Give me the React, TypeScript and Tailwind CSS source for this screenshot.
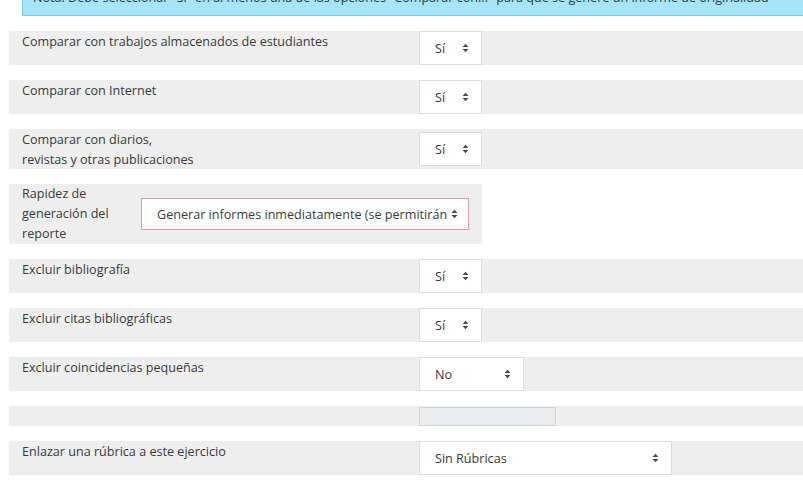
import React from 'react';

const font = { fontFamily: '"Open Sans", "Liberation Sans", sans-serif' };

function Caret() {
  return (
    <svg width="7" height="10" viewBox="0 0 7 10" className="shrink-0">
      <path d="M0.5 4 L3.5 0.8 L6.5 4 Z" fill="#4a4a4a" />
      <path d="M0.5 6 L3.5 9.2 L6.5 6 Z" fill="#4a4a4a" />
    </svg>
  );
}

function Select({ value, width, invalid }: { value: string; width: string; invalid?: boolean }) {
  return (
    <div
      className={`flex items-center justify-between gap-[4px] pl-[15px] pr-[12px] bg-white border ${
        invalid ? 'border-[#e59aa9] h-[32px]' : 'border-[#dcdcdc] h-[34px]'
      } ${width}`}
    >
      <span className="whitespace-nowrap pt-[2px]">{value}</span>
      <Caret />
    </div>
  );
}

type Row = { label: React.ReactNode; control: React.ReactNode };

const rows: Row[] = [
  { label: 'Comparar con trabajos almacenados de estudiantes', control: <Select value="Sí" width="w-[63px]" /> },
  { label: 'Comparar con Internet', control: <Select value="Sí" width="w-[63px]" /> },
  {
    label: (
      <>
        Comparar con diarios,
        <br />
        revistas y otras publicaciones
      </>
    ),
    control: <Select value="Sí" width="w-[63px]" />,
  },
];

const rowsAfter: Row[] = [
  { label: 'Excluir bibliografía', control: <Select value="Sí" width="w-[63px]" /> },
  { label: 'Excluir citas bibliográficas', control: <Select value="Sí" width="w-[63px]" /> },
  { label: 'Excluir coincidencias pequeñas', control: <Select value="No" width="w-[105px]" /> },
  { label: '', control: <div className="w-[137px] h-[19px] bg-[#e9ecef] border border-[#ced4da]" /> },
  { label: 'Enlazar una rúbrica a este ejercicio', control: <Select value="Sin Rúbricas" width="w-[253px]" /> },
];

function FormRow({ label, control }: Row) {
  return (
    <div className="flex items-center w-[820px] bg-[#eeeeee] mb-[15px]">
      <div className="self-start w-[410px] pl-[13px] min-h-[20px] leading-[19.5px] pt-[1px]">{label}</div>
      {control}
    </div>
  );
}

export default function App() {
  return (
    <div className="w-[803px] h-[490px] overflow-hidden bg-white text-[12.6px] text-[#373a3c]" style={font}>
      <div className="ml-[22px] -mt-[20px] w-[800px] bg-[#a8e4f7] border border-[#78c8de] pt-[7px] pb-[7px] pl-[10px] leading-[20px] whitespace-nowrap text-[#2b3a40]">
        Nota: Debe seleccionar "Sí" en al menos una de las opciones "Comparar con..." para que se genere un informe de originalidad
      </div>
      <div className="pl-[9px] pt-[15px]">
        {rows.map((r, i) => (
          <FormRow key={i} {...r} />
        ))}
        <div className="flex items-center w-[473px] bg-[#eeeeee] mb-[15px]">
          <div className="w-[132px] pl-[13px] pr-[8px] leading-[20px]">
            Rapidez de generación del reporte
          </div>
          <Select value="Generar informes inmediatamente (se permitirán" width="w-[328px]" invalid />
        </div>
        {rowsAfter.map((r, i) => (
          <FormRow key={i} {...r} />
        ))}
      </div>
    </div>
  );
}
